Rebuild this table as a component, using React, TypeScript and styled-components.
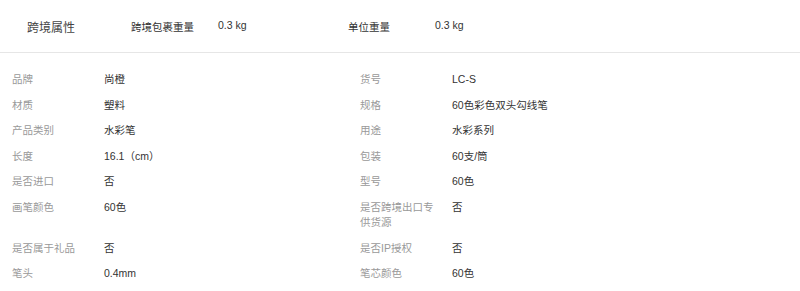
import React from 'react';
import styled, { createGlobalStyle } from 'styled-components';

const GlobalStyle = createGlobalStyle`
  html, body {
    margin: 0;
    padding: 0;
    background: #fff;
  }
  body {
    font-family: "Liberation Sans", "Noto Sans CJK SC", sans-serif;
  }
`;

type Attr = { label: string; value: string };

const crossBorder: Attr[] = [
  { label: '跨境包裹重量', value: '0.3 kg' },
  { label: '单位重量', value: '0.3 kg' },
];

const attrs: Attr[] = [
  { label: '品牌', value: '尚橙' },
  { label: '货号', value: 'LC-S' },
  { label: '材质', value: '塑料' },
  { label: '规格', value: '60色彩色双头勾线笔' },
  { label: '产品类别', value: '水彩笔' },
  { label: '用途', value: '水彩系列' },
  { label: '长度', value: '16.1（cm）' },
  { label: '包装', value: '60支/筒' },
  { label: '是否进口', value: '否' },
  { label: '型号', value: '60色' },
  { label: '画笔颜色', value: '60色' },
  { label: '是否跨境出口专供货源', value: '否' },
  { label: '是否属于礼品', value: '否' },
  { label: '是否IP授权', value: '否' },
  { label: '笔头', value: '0.4mm' },
  { label: '笔芯颜色', value: '60色' },
];

function App() {
  return (
    <Wrapper>
      <GlobalStyle />
      <Header>
        <Title>跨境属性</Title>
        {crossBorder.map((a) => (
          <HeaderItem key={a.label}>
            <HeaderLabel>{a.label}</HeaderLabel>
            <HeaderValue>{a.value}</HeaderValue>
          </HeaderItem>
        ))}
      </Header>
      <Grid>
        {attrs.map((a) => (
          <Cell key={a.label}>
            <Label>{a.label}</Label>
            <Value>{a.value}</Value>
          </Cell>
        ))}
      </Grid>
    </Wrapper>
  );
}

const Wrapper = styled.div`
  width: 800px;
  background: #fff;
`;

const Header = styled.div`
  height: 52px;
  display: flex;
  align-items: center;
  padding-left: 27px;
  border-bottom: 1px solid #e6e6e6;
  box-sizing: content-box;
`;

const Title = styled.div`
  width: 104px;
  font-size: 12px;
  color: #444;
`;

const HeaderItem = styled.div`
  width: 217px;
  display: flex;
  font-size: 10.5px;
  color: #333;
`;

const HeaderLabel = styled.span`
  width: 87px;
`;

const HeaderValue = styled.span``;

const Grid = styled.div`
  display: grid;
  grid-template-columns: 348px 348px;
  padding: 14px 0 0 12px;
`;

const Cell = styled.div`
  display: flex;
  padding: 5px 0;
  font-size: 10.5px;
  line-height: 15.5px;
`;

const Label = styled.div`
  width: 80px;
  padding-right: 12px;
  flex-shrink: 0;
  color: #999;
`;

const Value = styled.div`
  flex: 1;
  color: #333;
`;

export default App;
